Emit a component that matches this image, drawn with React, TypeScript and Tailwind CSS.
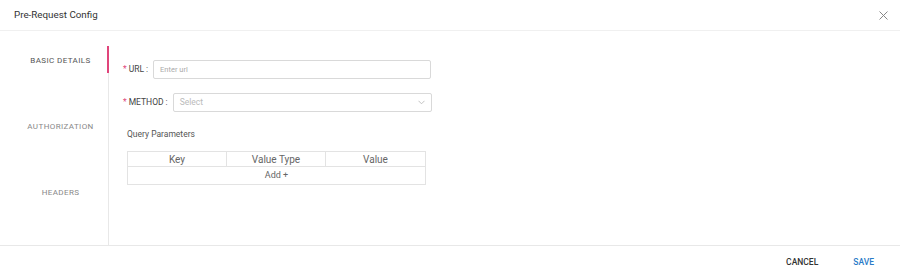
import React from "react";

export default function App() {
  const tabs = ["BASIC DETAILS", "AUTHORIZATION", "HEADERS"];
  return (
    <div
      className="w-[900px] h-[278px] bg-white flex flex-col overflow-hidden"
      style={{ fontFamily: "Roboto, 'Liberation Sans', sans-serif" }}
    >
      <div className="h-[31px] shrink-0 border-b border-[#f0f0f0] flex items-center justify-between pl-[14px] pr-[12px]">
        <span className="text-[9.8px] text-[#333]">Pre-Request Config</span>
        <svg width="9" height="9" viewBox="0 0 9 9" className="text-[#888]">
          <path d="M0.5 0.5 L8.5 8.5 M8.5 0.5 L0.5 8.5" stroke="currentColor" strokeWidth="1" />
        </svg>
      </div>
      <div className="flex h-[214px] shrink-0">
        <div className="w-[109px] pt-[15px] shrink-0">
          <div className="h-full border-r border-[#e8e8e8] flex flex-col gap-[39px]">
            {tabs.map((t, i) => (
              <div
                key={t}
                className={`relative h-[27px] flex items-center justify-center pl-[13px] pt-[2px] text-[8px] tracking-[0.4px] ${i === 0 ? "text-[#555]" : "text-[#888]"}`}
              >
                {t}
                {i === 0 && (
                  <div className="absolute right-[-1px] top-0 h-full w-[2px] bg-[#e0457b]" />
                )}
              </div>
            ))}
          </div>
        </div>
        <div className="flex-1 pl-[14px] pt-[29px]">
          <div className="flex items-center h-[19px]">
            <span className="text-[#e0457b] text-[8.5px] mr-[2px]">*</span>
            <span className="text-[8.5px] text-[#444]">URL</span>
            <span className="text-[8.5px] text-[#444] ml-[2px] mr-[5px]">:</span>
            <div className="w-[278px] h-[19px] border border-[#d9d9d9] rounded-[2px] flex items-center px-[6px] text-[7.5px] text-[#aaa]">
              Enter url
            </div>
          </div>
          <div className="flex items-center h-[19px] mt-[14px]">
            <span className="text-[#e0457b] text-[8.5px] mr-[2px]">*</span>
            <span className="text-[8.5px] text-[#444]">METHOD</span>
            <span className="text-[8.5px] text-[#444] ml-[2px] mr-[5px]">:</span>
            <div className="w-[259px] h-[19px] border border-[#d9d9d9] rounded-[2px] flex items-center justify-between px-[6px] text-[8.5px] text-[#bbb]">
              <span>Select</span>
              <svg width="7" height="5" viewBox="0 0 7 5" className="text-[#bbb]">
                <path d="M0.5 0.8 L3.5 3.8 L6.5 0.8" fill="none" stroke="currentColor" strokeWidth="0.9" />
              </svg>
            </div>
          </div>
          <div className="pl-[4px] mt-[16px] text-[8.5px] text-[#555] h-[12px] leading-[12px]">
            Query Parameters
          </div>
          <div className="ml-[4px] mt-[11px] w-[299px] border border-[#e3e3e3] text-[10px] text-[#666]">
            <div className="grid grid-cols-3 h-[15px] border-b border-[#e3e3e3]">
              <div className="flex items-center justify-center border-r border-[#e3e3e3]">Key</div>
              <div className="flex items-center justify-center border-r border-[#e3e3e3]">Value Type</div>
              <div className="flex items-center justify-center">Value</div>
            </div>
            <div className="h-[17px] flex items-center justify-center text-[9px] text-[#666]">Add +</div>
          </div>
        </div>
      </div>
      <div className="flex-1 border-t border-[#e8e8e8] flex items-center justify-end pr-[26px] gap-[35px] text-[8.5px] font-medium">
        <span className="text-[#333]">CANCEL</span>
        <span className="text-[#2a7bc8]">SAVE</span>
      </div>
    </div>
  );
}
